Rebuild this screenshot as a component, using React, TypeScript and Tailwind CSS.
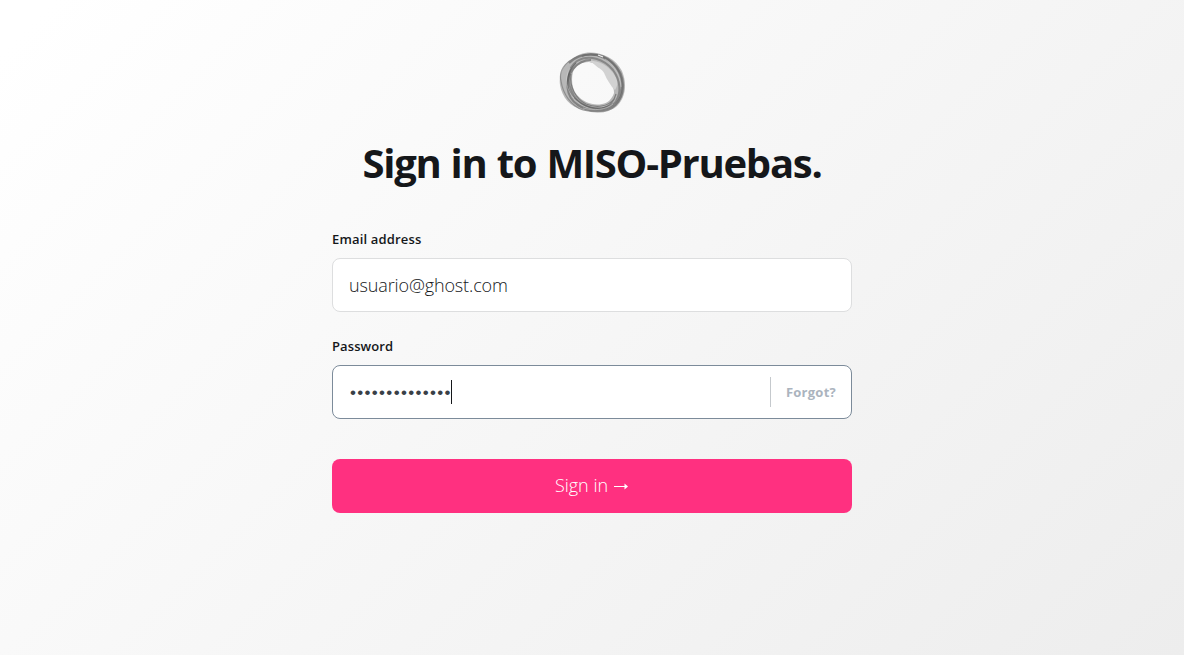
import React from 'react';

function Logo() {
  return (
    <svg className="h-[62px] w-[68px] blur-[0.3px]" viewBox="0 0 68 62" fill="none" aria-hidden="true">
      <path
        fillRule="evenodd"
        fill="#b8b8b8"
        d="M31 1.500C44 1.500 57 8 63 20c5 12 4 25-4 34-7 8-23 8-35 5C11 56 3 46 1 34-.5 24 4 13 13 8c5-4 11-6.500 18-6.500ZM30 11c-8 0-14 4-16 10-2 8-1 17 4 23 6 7 16 11 25 9 6-1 10-5 12-11 0-4-1-7-4-11-4-5-4-9-8-13-4-4-7-6-13-7Z"
      />
      <path fill="#d2d2d2" d="M24 10c13-2 26 4 32 15 3 5 3 9 0 14l-3-3c-3-5-5-7-7-12-2-6-6-6-10-10-3-3-7-4-12-4Z" />
      <path stroke="#555" strokeOpacity=".55" strokeWidth="2.2" d="M10 12C21 1 42 0 54 12c14 13 12 33 2 42-10 8-27 7-37 0C6 46 6 28 14 18c5-6 11-9 18-9" />
      <path stroke="#555" strokeOpacity=".5" strokeWidth="2" d="M23 5c15-5 31 4 37 17 6 13 2 28-9 33-12 6-28 1-36-10C7 31 8 17 18 10c12-7 27-2 36 9 8 11 8 23 3 31" />
      <path stroke="#777" strokeOpacity=".65" strokeWidth="1.2" d="M2 30c2 13 10 25 22 29 13 3 26 3 33-5 8-9 9-22 3-34C53 7 38 2 25 4 9 7-1 18 2 30Z" />
      <path stroke="#555" strokeOpacity=".6" strokeWidth="1.2" d="M17 12C8 21 5 33 13 44c7 9 19 15 30 13 9-2 12-7 14-14M12 23c-2 13 5 25 15 30 10 4 22 3 28-5" />
      <path stroke="#e0e0e0" strokeOpacity=".6" strokeWidth=".7" d="M11 17C5 28 7 38 15 47M46 8c10 6 16 17 16 28M24 57c11 3 23 2 30-4" />
      <path stroke="#f1f1f1" strokeWidth="1.2" d="m39 4 5 2" />
    </svg>
  );
}

export default function App() {
  return (
    <main className="flex h-[655px] w-full flex-col items-center bg-[linear-gradient(135deg,#ffffff_3%,#ededed_100%)] pt-[51px] font-['Open_Sans','Noto_Sans',sans-serif] text-[#15171a]">
      <form className="flex w-[520px] flex-col" onSubmit={(e) => e.preventDefault()}>
        <header className="flex flex-col items-center">
          <div className="pl-px"><Logo /></div>
          <h1 className="mt-[25px] text-[40px] leading-[50px] font-bold tracking-[-1.27px] whitespace-nowrap [word-spacing:1px]">
            Sign in to MISO-Pruebas.
          </h1>
        </header>

        <label className="mt-[41px] text-[13px] leading-[20px] font-semibold tracking-[0.17px]">Email address</label>
        <div className="mt-[9px] flex h-[54px] items-center rounded-lg border border-[#dddedf] bg-white px-4 text-[18px] font-light tracking-[-0.13px] text-[#15171a]">
          <span>usuario@ghost.com</span>
        </div>

        <label className="mt-[24px] text-[13px] leading-[20px] font-semibold tracking-[0.1px]">Password</label>
        <div className="mt-[9px] flex h-[54px] items-center rounded-lg border border-[#7c8b9a] bg-white pr-[15px] pl-[17px] text-[#394047]">
          <span className="mt-px w-[101px] font-['Liberation_Sans',sans-serif] text-[17px] leading-[20px] tracking-[1.32px] whitespace-nowrap">••••••••••••••</span>
          <span className="h-6 w-px bg-[#15171a]" />
          <span className="ml-auto flex h-[30px] items-center border-l border-[#c5c9cd] pl-[15px] text-[13px] font-bold tracking-[0.25px] text-[#abb4be]">
            <span className="mt-px">Forgot?</span>
          </span>
        </div>

        <button className="mt-[40px] flex h-[54px] items-center justify-center rounded-lg bg-[#ff3080] text-[18px] font-light text-white">
          <span className="-mt-0.5">Sign in</span>
          <svg className="ml-[6px] h-[10px] w-[15px]" viewBox="0 0 15 10" fill="none">
            <path d="M0 5.5h13" stroke="white" />
            <path d="M10.5 2.5v6L14 5.5Z" fill="white" />
          </svg>
        </button>
      </form>
    </main>
  );
}
